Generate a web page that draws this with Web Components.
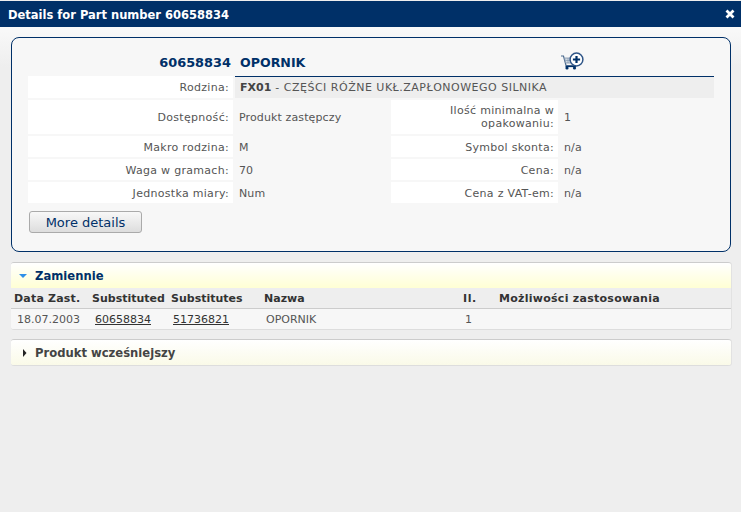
<!DOCTYPE html>
<html lang="pl">
<head>
<meta charset="utf-8">
<title>Details for Part number 60658834</title>
<style>
	html,body{margin:0;padding:0;height:100%;}
	body{background:#eee;font:11px "DejaVu Sans",Verdana,sans-serif;color:#333;overflow:hidden;}
</style>
</head>
<body>
<x-dialog heading="Details for Part number 60658834">
	<x-part-card number="60658834" name="OPORNIK">
		<x-row style="--h:22px">
			<x-field label="Rodzina:" wide><b>FX01</b> - CZĘŚCI RÓŻNE UKŁ.ZAPŁONOWEGO SILNIKA</x-field>
		</x-row>
		<x-row style="--h:34px">
			<x-field label="Dostępność:">Produkt zastępczy</x-field>
			<x-field label="Ilość minimalna w opakowaniu:" second>1</x-field>
		</x-row>
		<x-row style="--pt:1px">
			<x-field label="Makro rodzina:">M</x-field>
			<x-field label="Symbol skonta:" second>n/a</x-field>
		</x-row>
		<x-row style="--pt:1px">
			<x-field label="Waga w gramach:">70</x-field>
			<x-field label="Cena:" second>n/a</x-field>
		</x-row>
		<x-row style="--pt:1px">
			<x-field label="Jednostka miary:">Num</x-field>
			<x-field label="Cena z VAT-em:" second>n/a</x-field>
		</x-row>
		<x-button slot="actions">More details</x-button>
	</x-part-card>
	<x-section heading="Zamiennie" open>
		<x-table-row head>
			<span style="letter-spacing:.2px">Data Zast.</span><span>Substituted</span><span>Substitutes</span><span>Nazwa</span><span style="letter-spacing:.6px">Il.</span><span style="letter-spacing:.27px">Możliwości zastosowania</span>
		</x-table-row>
		<x-table-row>
			<span>18.07.2003</span><a>60658834</a><a>51736821</a><span>OPORNIK</span><span>1</span><span></span>
		</x-table-row>
	</x-section>
	<x-section heading="Produkt wcześniejszy"></x-section>
</x-dialog>

<script>
const shadow = (el, html) => { el.attachShadow({mode: 'open'}).innerHTML = html; };

customElements.define('x-dialog', class extends HTMLElement {
	connectedCallback(){
		shadow(this, `<style>
			:host{display:block;}
			header{margin-top:1px;height:26px;background:#003068;color:#fff;font-weight:bold;font-size:11.5px;display:flex;align-items:center;justify-content:space-between;padding:0 6px 0 8px;}
			header span{margin-top:2px;}
			svg{display:block;}
			main{padding:10px 10px 0 11px;background:linear-gradient(#f9f9f9,#eee 40px);}
		</style>
		<header><span>${this.getAttribute('heading')}</span>
			<svg width="10" height="10" viewBox="0 0 10 10"><path d="M1.5 1.5 8.5 8.5M8.5 1.5 1.5 8.5" stroke="#fff" stroke-width="2.8"/></svg>
		</header>
		<main><slot></slot></main>`);
	}
});

customElements.define('x-part-card', class extends HTMLElement {
	connectedCallback(){
		shadow(this, `<style>
			:host{display:block;background:#f7f7f7;border:1px solid #003068;border-radius:8px;padding:0 16px 18px 16px;height:195px;margin-bottom:10px;}
			.top{height:38px;display:flex;color:#003068;font-weight:bold;}
			.top span{display:flex;align-items:center;padding-top:11px;height:27px;}
			.num{width:203px;justify-content:flex-end;font-size:12.9px;}
			.name{margin-left:9px;width:321px;font-size:12.6px;}
			svg{display:block;margin-top:13px;}
			.rows{display:flex;flex-direction:column;gap:2px;}
			.actions{margin-top:8px;padding-left:1px;}
		</style>
		<div class="top"><span class="num">${this.getAttribute('number')}</span><span class="name">${this.getAttribute('name')}</span>
			<svg width="24" height="21" viewBox="0 0 24 21">
				<path d="M0 5h2.5l2.5 9.5h9.5" fill="none" stroke="#4b6a8e" stroke-width="1.2"/>
				<path d="M3.5 7h10v5H4.7z" fill="#cfd8e2" stroke="#7b90a8" stroke-width=".8"/>
				<path d="M4.5 9.5h9M7 7v5M10 7v5" stroke="#7b90a8" stroke-width=".6"/>
				<path d="M4.5 15.5h10.5" stroke="#003068" stroke-width="1.2"/>
				<circle cx="6" cy="17" r="1.6" fill="#003068"/><circle cx="13.5" cy="17" r="1.6" fill="#003068"/>
				<circle cx="15.5" cy="8.5" r="6.4" fill="#fff" stroke="#2f5587" stroke-width="1.5"/>
				<path d="M11.9 8.5h7.2M15.5 4.9v7.2" stroke="#003068" stroke-width="2.2"/>
			</svg>
		</div>
		<div class="rows"><slot></slot></div>
		<div class="actions"><slot name="actions"></slot></div>`);
	}
});

customElements.define('x-row', class extends HTMLElement {
	connectedCallback(){
		shadow(this, `<style>:host{display:flex;height:var(--h,21px);}</style><slot></slot>`);
	}
});

customElements.define('x-field', class extends HTMLElement {
	connectedCallback(){
		const second = this.hasAttribute('second'), wide = this.hasAttribute('wide');
		shadow(this, `<style>
			:host{display:flex;flex:${second || wide ? '1' : 'none'};line-height:13px;}
			.l,.v{padding-top:var(--pt,0);}
			.l{width:${second ? 167 : 205}px;box-sizing:border-box;background:#fff;color:#555;letter-spacing:.3px;text-align:right;padding-left:5px;padding-right:4px;display:flex;align-items:center;justify-content:flex-end;}
			.v{box-sizing:border-box;display:flex;align-items:center;white-space:pre;color:#555;padding-left:${wide ? 5 : 6}px;width:${second || wide ? 'auto' : '158px'};flex:${second || wide ? 1 : 'none'};${wide ? 'margin-left:2px;letter-spacing:.5px;background:#eee;border-top:1px solid #003068;' : 'letter-spacing:.12px;'}}
			::slotted(b){color:#444;letter-spacing:0;}
		</style>
		<div class="l">${this.getAttribute('label')}</div><div class="v"><span><slot></slot></span></div>`);
	}
});

customElements.define('x-button', class extends HTMLElement {
	connectedCallback(){
		shadow(this, `<style>
			:host{display:inline-flex;align-items:center;justify-content:center;box-sizing:border-box;width:113px;height:22px;border:1px solid #aaa;border-radius:3px;background:linear-gradient(#f8f8f8,#ddd);color:#003068;font-size:13px;}
		</style><slot></slot>`);
	}
});

customElements.define('x-section', class extends HTMLElement {
	connectedCallback(){
		const open = this.hasAttribute('open');
		shadow(this, `<style>
			:host{display:block;margin-bottom:9px;border-top:1px solid #ccc;border-bottom:1px solid #ddd;border-radius:3px;box-shadow:1px 0 0 #e2e2e2;overflow:hidden;}
			.head{box-sizing:border-box;height:25px;display:flex;align-items:center;padding:1px 0 0 8px;gap:8px;font-weight:bold;font-size:11.6px;color:${open ? '#003068' : '#444'};background:linear-gradient(#fff,${open ? '#ffffd4' : '#fafae8'});}
			svg{display:block;width:8px;height:8px;}
		</style>
		<div class="head">
			${open ? '<svg viewBox="0 0 8 8"><path d="M0 2h8L4 6z" fill="#2f8fe8"/></svg>' : '<svg viewBox="0 0 8 8"><path d="M4 0v8l3.5-4z" fill="#222"/></svg>'}
			<span>${this.getAttribute('heading')}</span>
		</div>
		<slot></slot>`);
	}
});

customElements.define('x-table-row', class extends HTMLElement {
	connectedCallback(){
		const head = this.hasAttribute('head');
		shadow(this, `<style>
			:host{display:grid;grid-template-columns:${head ? '78px 79px 93px 199px 36px 1fr' : '78px 78px 93px 199px 36px 1fr'};align-items:center;box-sizing:border-box;height:${head ? 21 : 20}px;
				${head ? 'padding-left:3px;background:#eee;border-bottom:1px solid #ccc;font-weight:bold;color:#333;' : 'background:#f7f7f7;padding-left:6px;color:#555;'}}
			::slotted(a){color:#333;text-decoration:underline;}
		</style><slot></slot>`);
	}
});
</script>
</body>
</html>
